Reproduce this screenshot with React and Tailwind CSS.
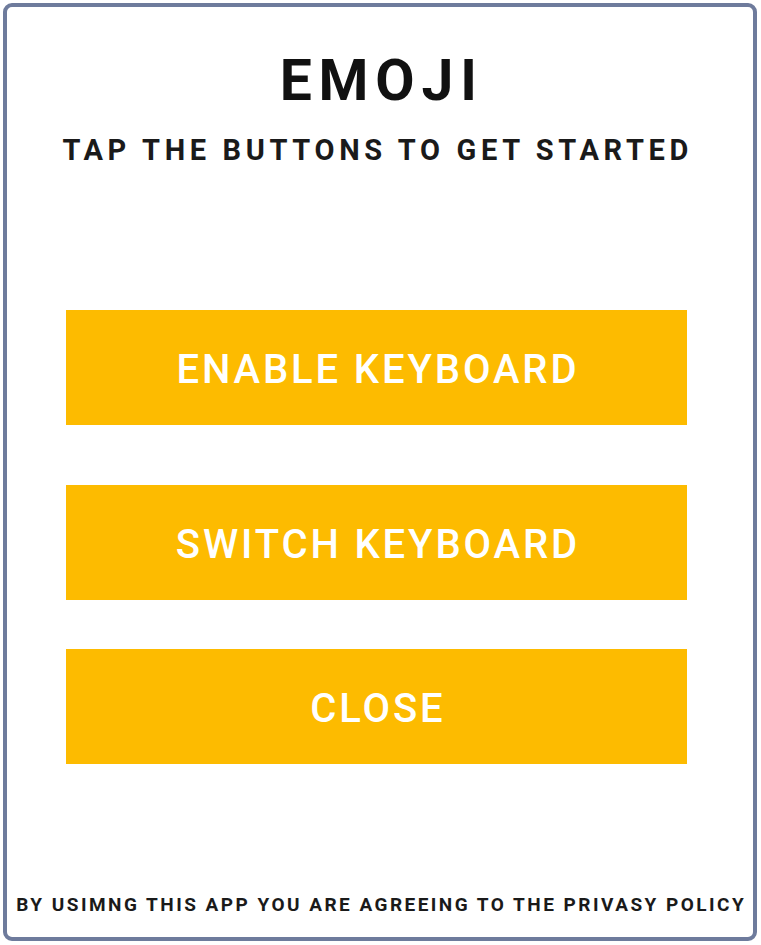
export default function App() {
  return (
    <div className="w-[761px] h-[945px] bg-white p-[3px]" style={{ fontFamily: 'Roboto, "Liberation Sans", sans-serif' }}>
      <div className="w-[754px] h-[938px] border-[4px] border-[#6e7b9c] rounded-[9px] bg-white flex flex-col items-center">
        <h1 className="mt-[40px] text-[57px] leading-[68px] font-bold tracking-[0.12em] text-[#111111] pl-[0.06em]">EMOJI</h1>
        <p className="mt-[17px] text-[29px] leading-[36px] font-bold tracking-[0.16em] text-[#1a1a1a] pr-[0.16em]">TAP THE BUTTONS TO GET STARTED</p>
        <div className="w-full flex flex-col items-center pr-[7px]">
          <button className="mt-[142px] w-[621px] h-[115px] pt-[5px] bg-[#fdbb00] text-white text-[40px] font-medium tracking-[0.072em] pl-[0.072em]">ENABLE KEYBOARD</button>
          <button className="mt-[60px] w-[621px] h-[115px] pt-[5px] bg-[#fdbb00] text-white text-[40px] font-medium tracking-[0.072em] pl-[0.072em]">SWITCH KEYBOARD</button>
          <button className="mt-[49px] w-[621px] h-[115px] pt-[5px] bg-[#fdbb00] text-white text-[40px] font-medium tracking-[0.072em] pl-[0.072em]">CLOSE</button>
        </div>
        <p className="mt-auto mb-[20px] text-[19px] leading-[24px] font-bold tracking-[0.13em] text-[#1a1a1a] pl-[0.13em]">BY USIMNG THIS APP YOU ARE AGREEING TO THE PRIVASY POLICY</p>
      </div>
    </div>
  );
}
